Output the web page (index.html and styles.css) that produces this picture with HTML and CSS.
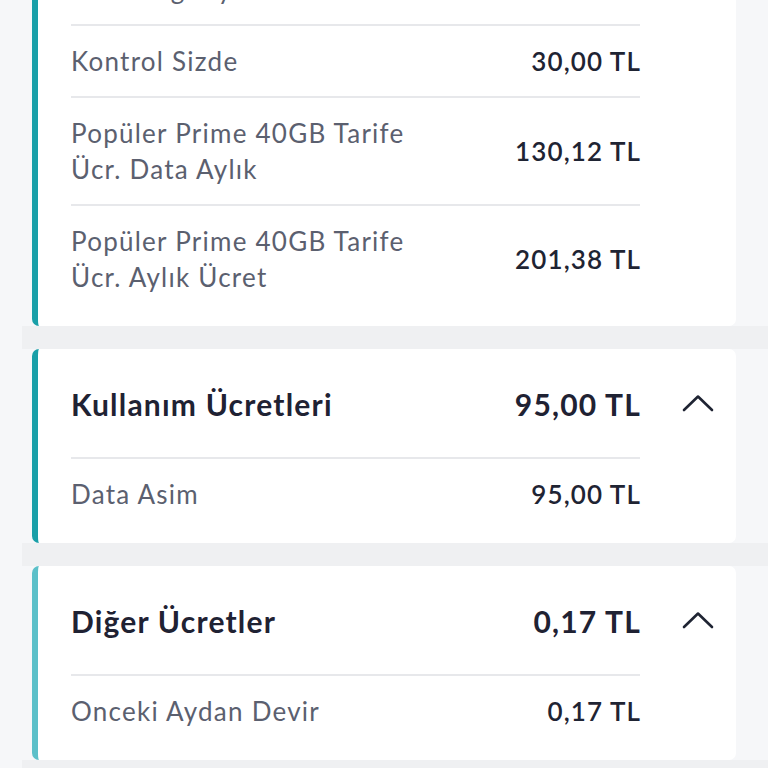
FILE: index.html
```html
<!DOCTYPE html>
<html lang="tr">
<head>
<meta charset="utf-8">
<link rel="stylesheet" href="styles.css">
</head>
<body>
<div class="list">
  <section class="section">
    <div class="card">
      <div class="row"><span class="label">Popüler Prime 40GB Tarife<br>Ücr. dergi Aylık Ücreti</span><span class="value">0,00 TL</span></div>
      <div class="row"><span class="label">Kontrol Sizde</span><span class="value">30,00 TL</span></div>
      <div class="row"><span class="label">Popüler Prime 40GB Tarife<br>Ücr. Data Aylık</span><span class="value">130,12 TL</span></div>
      <div class="row last"><span class="label">Popüler Prime 40GB Tarife<br>Ücr. Aylık Ücret</span><span class="value">201,38 TL</span></div>
    </div>
  </section>
  <section class="section">
    <div class="card">
      <div class="head">
        <div class="head-main"><span class="title">Kullanım Ücretleri</span><span class="total">95,00 TL</span></div>
        <div class="chev"><svg width="32" height="18" viewBox="0 0 32 18"><path d="M2 16 L16 2.5 L30 16" fill="none" stroke="#1f2433" stroke-width="2.6" stroke-linecap="round" stroke-linejoin="round"/></svg></div>
      </div>
      <div class="row last"><span class="label">Data Asim</span><span class="value">95,00 TL</span></div>
    </div>
  </section>
  <section class="section">
    <div class="card light">
      <div class="head">
        <div class="head-main"><span class="title">Diğer Ücretler</span><span class="total">0,17 TL</span></div>
        <div class="chev"><svg width="32" height="18" viewBox="0 0 32 18"><path d="M2 16 L16 2.5 L30 16" fill="none" stroke="#1f2433" stroke-width="2.6" stroke-linecap="round" stroke-linejoin="round"/></svg></div>
      </div>
      <div class="row last"><span class="label">Onceki Aydan Devir</span><span class="value">0,17 TL</span></div>
    </div>
  </section>
</div>
</body>
</html>
```
FILE: styles.css
```css
html, body {
  margin: 0;
  padding: 0;
  background: #f6f7f9;
  font-family: "Lato", "Noto Sans", sans-serif;
  overflow: hidden;
  height: 768px;
}
.list {
  margin-top: -100px;
}
.section {
  margin-left: 22px;
  padding: 0 32px 0 10px;
  border-bottom: 23px solid #eff0f2;
  background: #f6f7f9;
}
.card {
  background: #ffffff;
  border-left: 6px solid #199fa8;
  border-radius: 7px;
  padding: 0 0 14px 33px;
}
.card.light {
  border-left-color: #5cc0c9;
}
.section:first-child .card {
  padding-top: 18px;
}
.row {
  display: flex;
  align-items: center;
  justify-content: space-between;
  margin-right: 96px;
  padding: 17px 0 17px 0;
  border-bottom: 2px solid #e7e8eb;
  font-size: 26px;
  letter-spacing: 1.25px;
  line-height: 36px;
}
.row.last {
  border-bottom: none;
}
.label {
  color: #5b606f;
}
.value {
  color: #1f2433;
  font-weight: 600;
  letter-spacing: 1.1px;
  margin-right: -1px;
}
.head {
  display: flex;
  align-items: center;
}
.head-main {
  flex: 1;
  display: flex;
  justify-content: space-between;
  align-items: center;
  padding: 37px 0 35px 0;
  border-bottom: 2px solid #e7e8eb;
  font-size: 30px;
  letter-spacing: 1.2px;
  line-height: 36px;
  font-weight: 700;
  color: #1f2233;
}
.total {
  margin-right: -1px;
}
.chev {
  box-sizing: border-box;
  width: 96px;
  display: flex;
  justify-content: center;
  padding-left: 19px;
  padding-bottom: 2px;
}
```
